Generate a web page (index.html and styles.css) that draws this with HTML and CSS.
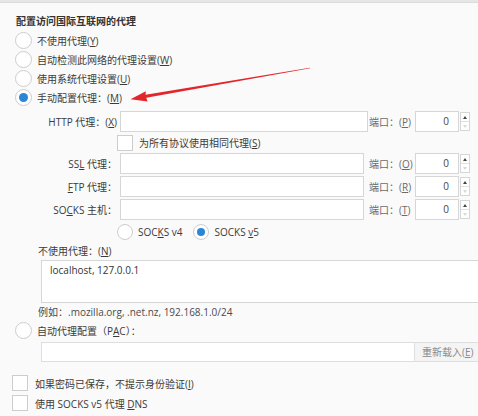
FILE: index.html
```html
<!DOCTYPE html>
<html>
<head>
<meta charset="utf-8">
<link rel="stylesheet" href="styles.css">
</head>
<body>
<div class="page">
  <div class="topband"></div>
  <div class="title">配置访问国际互联网的代理</div>
  <div class="opt"><span class="radio"></span><span>不使用代理(<u>Y</u>)</span></div>
  <div class="opt"><span class="radio"></span><span>自动检测此网络的代理设置(<u>W</u>)</span></div>
  <div class="opt"><span class="radio"></span><span>使用系统代理设置(<u>U</u>)</span></div>
  <div class="opt"><span class="radio on"></span><span>手动配置代理：(<u>M</u>)</span></div>

  <div class="prow http">
    <span class="plabel">HTTP 代理：(<u>X</u>)</span>
    <span class="field"></span>
    <span class="portlbl">端口：(<u>P</u>)</span>
    <span class="port">0</span>
    <span class="spin"><i class="up"></i><i class="dn"></i></span>
  </div>
  <div class="same"><span class="check"></span><span>为所有协议使用相同代理(<u>S</u>)</span></div>
  <div class="prow other">
    <span class="plabel">SS<u>L</u> 代理：</span>
    <span class="field"></span>
    <span class="portlbl">端口：(<u>O</u>)</span>
    <span class="port">0</span>
    <span class="spin"><i class="up"></i><i class="dn"></i></span>
  </div>
  <div class="prow other">
    <span class="plabel"><u>F</u>TP 代理：</span>
    <span class="field"></span>
    <span class="portlbl">端口：(<u>R</u>)</span>
    <span class="port">0</span>
    <span class="spin"><i class="up"></i><i class="dn"></i></span>
  </div>
  <div class="prow other">
    <span class="plabel">SO<u>C</u>KS 主机：</span>
    <span class="field"></span>
    <span class="portlbl">端口：(<u>T</u>)</span>
    <span class="port">0</span>
    <span class="spin"><i class="up"></i><i class="dn"></i></span>
  </div>
  <div class="socks">
    <span class="radio sm"></span><span class="slabel">SOC<u>K</u>S v4</span>
    <span class="radio sm on"></span><span>SOCKS <u>v</u>5</span>
  </div>
  <div class="npl">不使用代理：(<u>N</u>)</div>
  <div class="noproxy">localhost, 127.0.0.1</div>
  <div class="npl example">例如：.mozilla.org, .net.nz, 192.168.1.0/24</div>
  <div class="opt pac"><span class="radio"></span><span>自动代理配置（P<u>A</u>C）：</span></div>
  <div class="pacrow"><span class="pacfield"></span><span class="reload">重新载入(<u>E</u>)</span></div>
  <div class="cb first"><span class="check"></span><span>如果密码已保存，不提示身份验证(<u>I</u>)</span></div>
  <div class="cb"><span class="check"></span><span>使用 SOCKS v5 代理 <u>D</u>NS</span></div>
</div>
<svg class="arrow" width="478" height="416" viewBox="0 0 478 416">
  <polygon fill="#e3262a" points="310.1,68.3 146.3,97.8 147.6,101.4 130.5,99.2 145.8,91.2 145.6,94.8 309.9,67.7"/>
</svg>
</body>
</html>
```
FILE: styles.css
```css
* { box-sizing: border-box; }
html, body { margin: 0; padding: 0; }
body {
  width: 478px;
  height: 416px;
  overflow: hidden;
  position: relative;
  background: #fafafa;
  font-family: "Open Sans", "Noto Sans CJK SC", sans-serif;
  font-size: 10px;
  color: #3a3a3a;
}
u { text-decoration: underline; text-underline-offset: 1px; }
.topband { height: 3px; background: #e6e6e6; border-bottom: 1px solid #dcdcdc; }
.title { height: 28px; padding: 8px 0 0 16px; line-height: 20px; font-weight: bold; color: #333; }
.opt { height: 19px; display: flex; align-items: center; padding-left: 15px; }
.radio {
  flex: none;
  width: 17px; height: 17px;
  border-radius: 50%;
  border: 1px solid #cdcdcd;
  background: #fff;
  margin-right: 5px;
  display: flex; align-items: center; justify-content: center;
}
.radio.on::after { content: ""; width: 9px; height: 9px; border-radius: 50%; background: #2b87d4; }
.radio.sm { width: 16px; height: 16px; }
.radio.sm.on::after { width: 8px; height: 8px; }

.prow { display: flex; align-items: center; height: 23px; }
.http { margin-top: 3px; }
.plabel { flex: none; width: 117px; text-align: right; }
.field { flex: none; height: 21px; margin-left: 3px; background: #fff; border: 1px solid #d6d6d6; }
.http .field { width: 248px; }
.other .field { width: 244px; margin-right: 4px; }
.portlbl { flex: none; width: 47px; padding-left: 1px; color: #6a6a6a; }
.port {
  flex: none; width: 44px; height: 21px;
  background: #fff; border: 1px solid #d6d6d6;
  text-align: right; padding-right: 9px; line-height: 19px; color: #444;
}
.spin {
  flex: none; width: 10px; height: 19px; margin-left: 1px;
  border: 1px solid #d6d6d6; background: #fff;
  display: flex; flex-direction: column;
}
.spin i { flex: 1; display: flex; align-items: center; justify-content: center; }
.spin .up { border-bottom: 1px solid #e2e2e2; }
.spin .up::after { content: ""; border-left: 2px solid transparent; border-right: 2px solid transparent; border-bottom: 3px solid #444; }
.spin .dn::after { content: ""; border-left: 2px solid transparent; border-right: 2px solid transparent; border-top: 3px solid #d8d8d8; }

.same { height: 19px; display: flex; align-items: center; padding-left: 117px; }
.check { flex: none; width: 16px; height: 16px; border: 1px solid #cdcdcd; background: #fff; margin-right: 6px; }

.socks { height: 21px; display: flex; align-items: center; padding-left: 117px; }
.slabel { margin-right: 11px; }

.npl { height: 18px; line-height: 18px; padding-left: 38px; }
.noproxy {
  margin-left: 41px; width: 440px; height: 43px;
  background: #fff; border: 1px solid #d6d6d6;
  padding: 2px 8px; line-height: 15px; color: #333;
}
.example { color: #4a4a4a; }
.pac { height: 18px; }
.pacrow { display: flex; height: 20px; margin: 3px 0 0 41px; }
.pacfield { flex: none; width: 373px; background: #fff; border: 1px solid #dedede; border-right: none; }
.reload {
  flex: none; width: 70px; background: #f4f4f4; border: 1px solid #dedede;
  color: #8a8a8a; padding-left: 7px; line-height: 18px;
}
.cb { height: 20px; display: flex; align-items: center; padding-left: 12px; }
.cb .check { margin-right: 7px; }
.cb.first { margin-top: 11px; }

.arrow { position: absolute; left: 0; top: 0; pointer-events: none; }
```
